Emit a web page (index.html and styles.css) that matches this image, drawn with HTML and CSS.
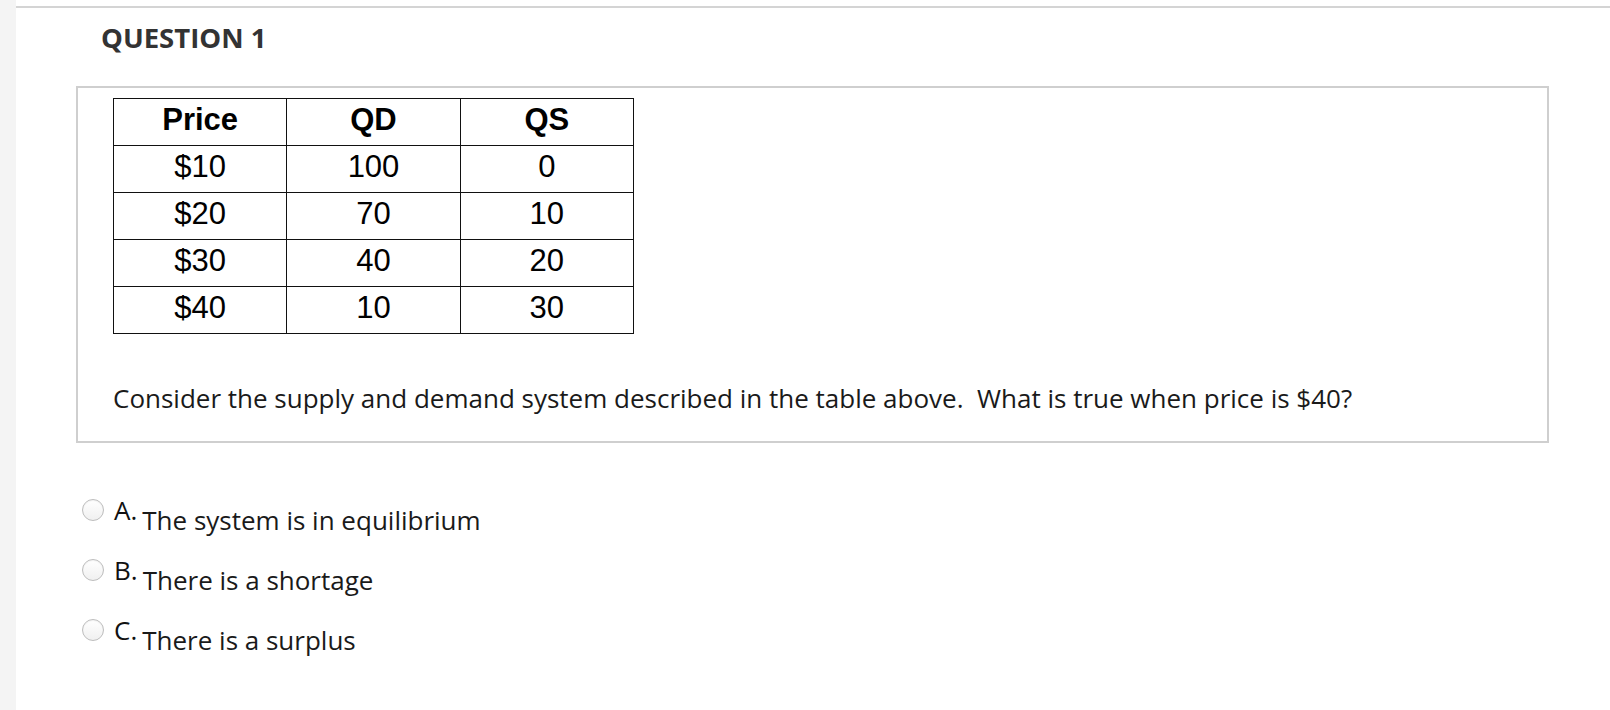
FILE: index.html
```html
<!DOCTYPE html>
<html>
<head>
<meta charset="utf-8">
<link rel="stylesheet" href="styles.css">
</head>
<body>
<div class="page">
  <div class="sidebar"></div>
  <div class="main">
    <h1 class="title">QUESTION 1</h1>
    <div class="question-box">
      <table class="data-table">
        <tr><th>Price</th><th>QD</th><th>QS</th></tr>
        <tr><td>$10</td><td>100</td><td>0</td></tr>
        <tr><td>$20</td><td>70</td><td>10</td></tr>
        <tr><td>$30</td><td>40</td><td>20</td></tr>
        <tr><td>$40</td><td>10</td><td>30</td></tr>
      </table>
      <p class="question-text">Consider the supply and demand system described in the table above.&nbsp; What is true when price is $40?</p>
    </div>
    <div class="options">
      <div class="option"><span class="radio"></span><span class="letter">A.</span><span class="answer">The system is in equilibrium</span></div>
      <div class="option"><span class="radio"></span><span class="letter">B.</span><span class="answer">There is a shortage</span></div>
      <div class="option"><span class="radio"></span><span class="letter">C.</span><span class="answer">There is a surplus</span></div>
    </div>
  </div>
</div>
</body>
</html>
```

FILE: styles.css
```css
html, body {
  margin: 0;
  padding: 0;
  background: #ffffff;
}
.page {
  display: flex;
  min-height: 710px;
  font-family: "Open Sans", "Liberation Sans", sans-serif;
}
.sidebar {
  width: 16px;
  background: #f4f4f4;
  flex: none;
}
.main {
  flex: 1;
  margin-top: 6px;
  border-top: 2px solid #d4d4d4;
}
.title {
  margin: 14px 0 0 85px;
  font-size: 27.5px;
  line-height: 32px;
  font-weight: 700;
  color: #333333;
}
.question-box {
  margin: 32px 61px 0 60px;
  border: 2px solid #cfcfcf;
  padding: 10px 0 27px 35px;
}
.data-table {
  border-collapse: collapse;
  table-layout: fixed;
  width: 521px;
  font-family: "Liberation Sans", Arial, sans-serif;
  color: #000;
}
.data-table th, .data-table td {
  border: 1px solid #111111;
  height: 46px;
  padding: 0 0 5px 0;
  box-sizing: border-box;
  text-align: center;
  font-size: 31px;
  line-height: 41px;
}
.data-table th {
  font-weight: 700;
}
.question-text {
  margin: 48px 0 0 0;
  font-size: 26px;
  line-height: 32px;
  color: #1a1a1a;
}
.options {
  margin: 53px 0 0 66px;
  display: flex;
  flex-direction: column;
}
.option {
  display: flex;
  align-items: flex-start;
  height: 60px;
}
.radio {
  width: 20px;
  height: 20px;
  margin-top: 3px;
  border: 1px solid #bdbdbd;
  border-radius: 50%;
  background: linear-gradient(#ffffff, #f0f0f0);
  box-shadow: inset 0 1px 1px rgba(0,0,0,0.05);
  flex: none;
}
.letter {
  margin-left: 10px;
  font-size: 26px;
  line-height: 28px;
  color: #111;
}
.answer {
  margin-left: 5px;
  margin-top: 10px;
  font-size: 26px;
  line-height: 28px;
  color: #1a1a1a;
}
```
